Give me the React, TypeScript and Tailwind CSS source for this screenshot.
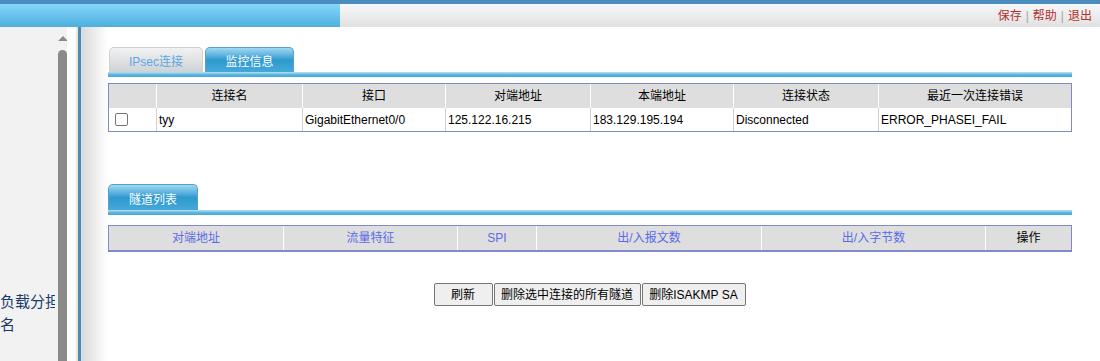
import React from "react";

const FONT = '"Liberation Sans", Arial, "Noto Sans CJK SC", sans-serif';

const t1Cols = [
  { w: 47, h: "", v: "" },
  { w: 146, h: "连接名", v: "tyy" },
  { w: 143, h: "接口", v: "GigabitEthernet0/0" },
  { w: 145, h: "对端地址", v: "125.122.16.215" },
  { w: 143, h: "本端地址", v: "183.129.195.194" },
  { w: 145, h: "连接状态", v: "Disconnected" },
  { w: 193, h: "最近一次连接错误", v: "ERROR_PHASEI_FAIL" },
];

const t2Cols = [
  { w: 174, h: "对端地址" },
  { w: 174, h: "流量特征" },
  { w: 79, h: "SPI" },
  { w: 225, h: "出/入报文数" },
  { w: 224, h: "出/入字节数" },
  { w: 86, h: "操作", black: true },
];

function TabLine() {
  return <div className="h-[5px] w-full bg-gradient-to-b from-[#b8e3f5] via-[#5fb6df] to-[#43a6d6]" />;
}

export default function App() {
  return (
    <div
      className="w-[1100px] h-[361px] overflow-hidden bg-white flex flex-col text-[12px] text-black"
      style={{ fontFamily: FONT }}
    >
      {/* top bar */}
      <div className="h-[4px] bg-[#4b8dbe] shrink-0" />
      <div className="h-[23px] flex shrink-0">
        <div className="w-[340px] bg-gradient-to-b from-[#84d7fb] to-[#4cafdd]" />
        <div className="flex-1 bg-gradient-to-b from-[#f6f8f9] to-[#e1e1e1] flex items-end justify-end pr-[8px] pb-[3px] text-[12px] leading-[16px]">
          <span className="text-[#b3302c]">保存</span>
          <span className="text-[#b0a0a0] mx-[4px]">|</span>
          <span className="text-[#b3302c]">帮助</span>
          <span className="text-[#b0a0a0] mx-[4px]">|</span>
          <span className="text-[#b3302c]">退出</span>
        </div>
      </div>

      <div className="flex flex-1 min-h-0">
        {/* left sidebar */}
        <div className="w-[58px] bg-[#f2f2f2] shrink-0 relative">
          <div className="w-[55px] h-full overflow-hidden flex flex-col pt-[263px] text-[15px] leading-[23px] text-[#173a69]">
            <div className="whitespace-nowrap">负载分担</div>
            <div className="whitespace-nowrap">名</div>
          </div>
        </div>
        {/* scrollbar */}
        <div className="w-[9px] bg-[#f2f2f2] shrink-0 flex flex-col items-center">
          <div className="mt-[9px] w-0 h-0 border-l-[5px] border-r-[5px] border-b-[5px] border-l-transparent border-r-transparent border-b-[#8a8a8a]" />
          <div className="mt-[9px] w-[9px] flex-1 bg-[#8a8a8a] rounded-t-[5px]" />
        </div>
        <div className="w-[9px] bg-white shrink-0" />
        <div className="w-[2px] bg-[#ece7d5] shrink-0" />
        <div className="w-[3px] bg-[#4a8bbc] shrink-0" />
        <div className="w-[27px] bg-gradient-to-r from-[#d9d9d9] to-white shrink-0" />

        {/* content */}
        <div className="w-[964px] shrink-0 flex flex-col pt-[20px]">
          {/* tabs */}
          <div className="flex items-end h-[25px]">
            <div className="ml-[1px] w-[94px] h-[25px] rounded-t-[5px] border border-b-0 border-[#cfcfcf] bg-gradient-to-b from-[#f2f2f2] to-[#cfd2d5] flex items-center justify-center pt-[3px] text-[12px] text-[#5aa8e2]">
              IPsec连接
            </div>
            <div className="ml-[2px] w-[89px] h-[25px] rounded-t-[5px] border border-b-0 border-[#5a9fcb] bg-gradient-to-b from-[#9ed9f4] via-[#2c99cf] to-[#45a8d9] flex items-center justify-center pt-[3px] text-[12px] text-white">
              监控信息
            </div>
          </div>
          <TabLine />

          {/* table 1 */}
          <div className="mt-[6px] border border-[#8189cc] flex flex-col">
            <div className="flex h-[24px] bg-[#dedede]">
              {t1Cols.map((c, i) => (
                <div
                  key={i}
                  style={{ width: c.w }}
                  className={`flex items-center justify-center ${i > 0 ? "border-l border-white" : ""}`}
                >
                  {c.h}
                </div>
              ))}
            </div>
            <div className="flex h-[23px] bg-white">
              {t1Cols.map((c, i) => (
                <div
                  key={i}
                  style={{ width: c.w }}
                  className={`flex items-center ${i > 0 ? "border-l border-[#cfcfcf] pl-[2px]" : "pl-[6px]"}`}
                >
                  {i === 0 ? (
                    <div className="w-[13px] h-[13px] border border-[#767676] rounded-[2px] bg-white" />
                  ) : (
                    c.v
                  )}
                </div>
              ))}
            </div>
          </div>

          {/* tunnel tab */}
          <div className="mt-[52px] flex items-end h-[26px]">
            <div className="w-[90px] h-[26px] rounded-t-[5px] border border-b-0 border-[#5a9fcb] bg-gradient-to-b from-[#9ed9f4] via-[#2c99cf] to-[#45a8d9] flex items-center justify-center pt-[4px] text-[12px] text-white">
              隧道列表
            </div>
          </div>
          <TabLine />

          {/* table 2 */}
          <div className="mt-[10px] border border-b-2 border-[#8189cc] flex h-[27px] bg-[#dedede]">
            {t2Cols.map((c, i) => (
              <div
                key={i}
                style={{ width: c.w }}
                className={`flex items-center justify-center ${i > 0 ? "border-l border-white" : ""} ${c.black ? "text-black" : "text-[#5a6be8]"}`}
              >
                {c.h}
              </div>
            ))}
          </div>

          {/* buttons */}
          <div className="mt-[31px] flex justify-center gap-[1px] pr-[1px]">
            <button className="w-[59px] h-[23px] border border-[#767676] rounded-[2px] bg-[#efefef] text-[12px] text-black">
              刷新
            </button>
            <button className="w-[147px] h-[23px] border border-[#767676] rounded-[2px] bg-[#efefef] text-[12px] text-black">
              删除选中连接的所有隧道
            </button>
            <button className="w-[104px] h-[23px] border border-[#767676] rounded-[2px] bg-[#efefef] text-[12px] text-black">
              删除ISAKMP SA
            </button>
          </div>
        </div>
      </div>
    </div>
  );
}
